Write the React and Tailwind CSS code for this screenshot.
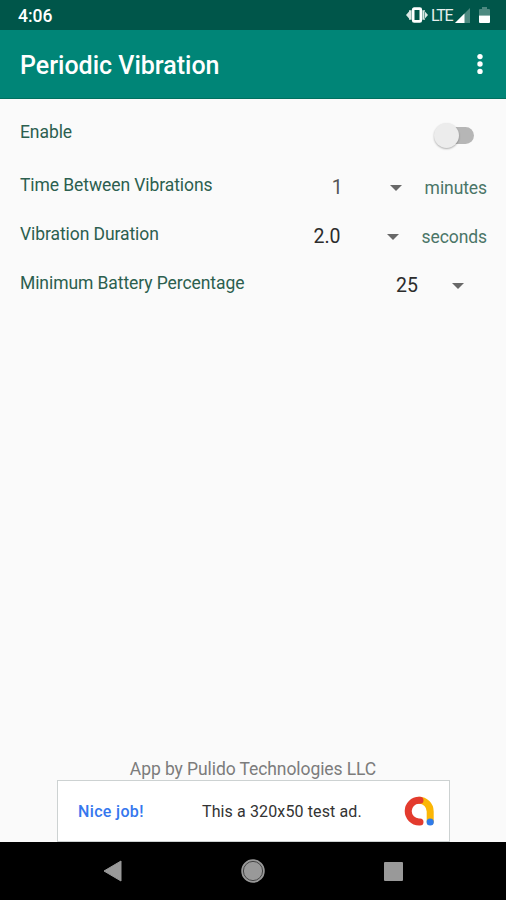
const Caret = ({ className }) => (
    <svg viewBox="0 0 12 6" className={`w-3 h-1.5 shrink-0 ${className}`}>
        <path d="M0 0h12L6 6z" fill="#686868" />
    </svg>
);

const StatusBar = () => {
    return (
        <div className="h-[30px] shrink-0 bg-[#00564a] flex items-center justify-between pl-[18px] pr-[16px] text-white">
            <span className="text-[17.5px] leading-none font-medium pt-[3px]">4:06</span>

            <div className="flex items-center">
                {/* Vibrate */}
                <svg viewBox="0 0 22 16" className="w-[22px] h-4" fill="#dbe8e5">
                    <path d="M0 8l3.5-4v8zM22 8l-3.5-4v8zM3 3.2h2.6v9.6H3zM16.4 3.2h2.6v9.6h-2.6z" />
                    <rect x="7.2" y="1.6" width="7.6" height="12.8" rx="1" fill="none" stroke="#fff" strokeWidth="2.6" />
                </svg>
                <span className="ml-[3px] w-[22px] text-[16px] leading-none tracking-[-1.3px] text-[#e6efed] pt-[1px]">LTE</span>
                {/* Signal */}
                <svg viewBox="0 0 15 15" className="ml-[2px] w-[15px] h-[15px]">
                    <path d="M15 0v15H0z" fill="#4d8980" />
                    <path d="M9.5 5.5V15H0z" fill="#fff" />
                </svg>
                {/* Battery */}
                <svg viewBox="0 0 11 16" className="ml-[9px] w-[11px] h-4">
                    <path d="M3 0h5v2h2q1 0 1 1v5.5H0V3q0-1 1-1h2z" fill="#4d8980" />
                    <path d="M0 8.5h11V15q0 1-1 1H1q-1 0-1-1z" fill="#fff" />
                </svg>
            </div>
        </div>
    );
};

const Header = () => {
    return (
        <div className="h-[69px] shrink-0 bg-[#008577] border-b border-[#00705f] flex items-center justify-between pl-[20px] pr-[23px]">
            <h1 className="text-[25px] leading-none font-medium text-white pt-[2px]">Periodic Vibration</h1>
            <svg viewBox="0 0 6 22" className="w-1.5 h-[22px]" fill="#fff">
                <circle cx="3" cy="3.6" r="2.7" />
                <circle cx="3" cy="11" r="2.7" />
                <circle cx="3" cy="18.4" r="2.7" />
            </svg>
        </div>
    );
};

const Row = ({ label, children }) => (
    <div className="h-[49px] flex items-start justify-between">
        <span className="text-[17.5px] leading-5 tracking-[-0.08px] text-[#2c5f4f]">{label}</span>
        <div className="h-5 mt-[3px] flex items-center">{children}</div>
    </div>
);

const App = () => {
    return (
        <div className="w-full h-[900px] flex flex-col bg-[#fafafa] overflow-hidden font-['Roboto',sans-serif]">
            <StatusBar />
            <Header />

            <div className="flex-1 pl-[20px] pr-[19px] pt-[23px]">
                <div className="h-[53px] flex items-start justify-between">
                    <span className="text-[17.5px] leading-5 tracking-[-0.08px] text-[#2c5f4f]">Enable</span>
                    {/* Switch, off */}
                    <div className="w-10 h-[26px] mr-[13px] flex items-center">
                        <div className="size-[25px] rounded-full bg-[#ececec] shadow-[0_1px_2px_rgba(0,0,0,0.3)] z-10" />
                        <div className="w-[27px] h-[17px] -ml-[12px] rounded-full bg-[#b6b6b6]" />
                    </div>
                </div>

                <Row label="Time Between Vibrations">
                    <span className="text-[19.5px] text-[#555]">1</span>
                    <Caret className="ml-[47px]" />
                    <span className="ml-[23px] text-[17.5px] tracking-[-0.08px] text-[#4a7567]">minutes</span>
                </Row>
                <Row label="Vibration Duration">
                    <span className="text-[19.5px] text-[#2c2c2c]">2.0</span>
                    <Caret className="ml-[46px]" />
                    <span className="ml-[23px] text-[17.5px] tracking-[-0.08px] text-[#4a7567]">seconds</span>
                </Row>
                <Row label="Minimum Battery Percentage">
                    <span className="text-[19.5px] text-[#2c2c2c]">25</span>
                    <Caret className="ml-[34px] mr-[23px]" />
                </Row>
            </div>

            <p className="text-center text-[17.5px] leading-5 tracking-[-0.08px] text-[#7c7c7c] mb-[1px]">App by Pulido Technologies LLC</p>

            {/* Banner ad */}
            <div className="w-[393px] h-[62px] shrink-0 ml-[57px] bg-white border border-[#cdd2d2] flex items-center">
                <span className="ml-[20px] w-[124px] pt-[2px] text-[16px] tracking-[0.35px] font-medium text-[#3577ee]">Nice job!</span>
                <span className="w-[202px] pt-[2px] text-[16px] tracking-[0.12px] text-[#333]">This a 320x50 test ad.</span>
                <svg viewBox="0 0 30 30" className="w-[30px] h-[30px]" fill="none" strokeWidth="7" strokeLinecap="round">
                    <path d="M15 4.3A11.2 11.2 0 0 1 26.2 15.5v10" stroke="#fbb605" />
                    <path d="M16 4.3H15A10.8 10.8 0 0 0 15 25.9H16" stroke="#e33b2e" />
                    <circle cx="26.2" cy="26" r="3.6" fill="#2f7bea" />
                </svg>
            </div>

            {/* Navigation bar */}
            <div className="h-[58px] shrink-0 bg-black flex items-center justify-between pl-[103px] pr-[103px]">
                <svg viewBox="0 0 19 22" className="w-[19px] h-[22px]">
                    <path d="M18 1v20L1 11z" fill="#999" stroke="#999" strokeLinejoin="round" />
                </svg>
                <svg viewBox="0 0 24 24" className="size-6">
                    <circle cx="12" cy="12" r="11" fill="#999" stroke="#999" strokeWidth="1.5" />
                    <circle cx="12" cy="12" r="9.6" fill="none" stroke="#444" />
                </svg>
                <div className="size-[19px] rounded-[1px] bg-[#999]" />
            </div>
        </div>
    );
};

export default App;
